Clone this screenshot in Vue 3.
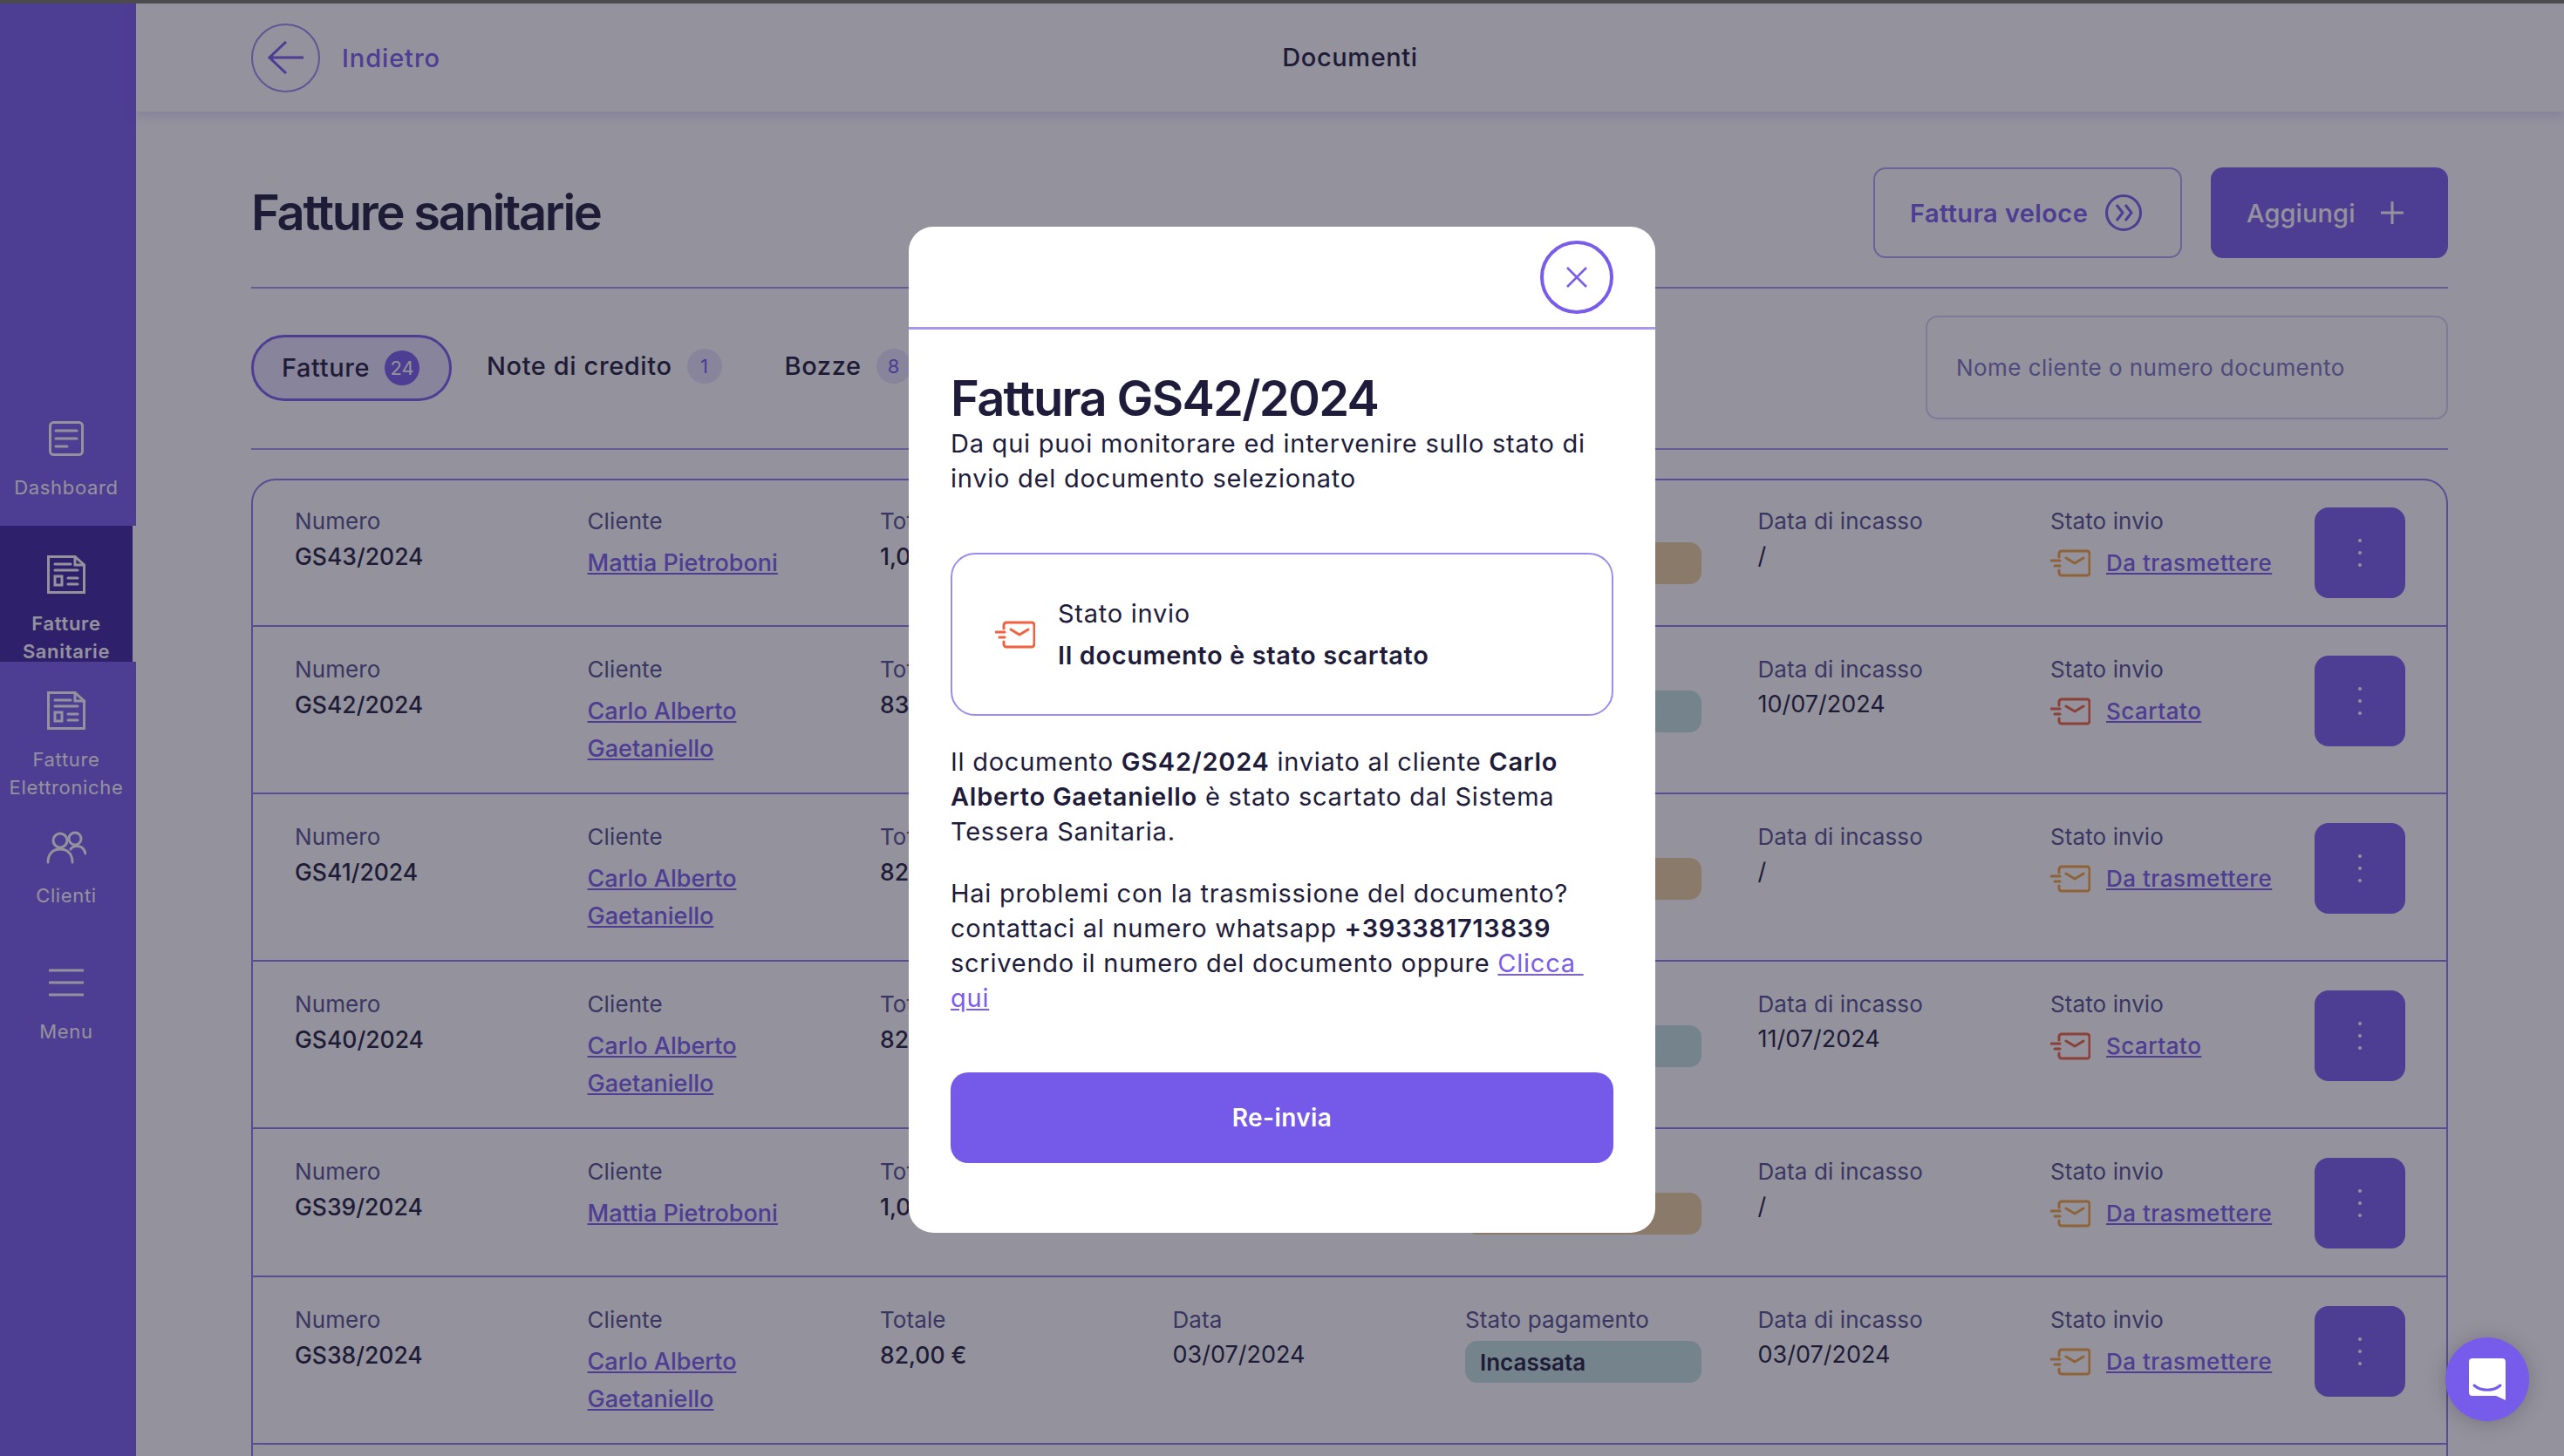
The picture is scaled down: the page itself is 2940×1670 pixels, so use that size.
<script setup>
const navItems = [
  { id: 'dashboard', label: ['Dashboard'], icon: 'dash' },
  { id: 'sanitarie', label: ['Fatture', 'Sanitarie'], icon: 'doc', active: true },
  { id: 'elettroniche', label: ['Fatture', 'Elettroniche'], icon: 'doc' },
  { id: 'clienti', label: ['Clienti'], icon: 'people' },
  { id: 'menu', label: ['Menu'], icon: 'menu' }
];

const carlo = 'Carlo Alberto Gaetaniello';
const mattia = 'Mattia Pietroboni';

// Fatture list, the part behind the modal is there too
const invoices = [
  { num: 'GS43/2024', client: mattia, total: '1,000,00 €', date: '03/07/2024', paid: false, cashed: '/', status: 'Da trasmettere' },
  { num: 'GS42/2024', client: carlo, total: '83,00 €', date: '10/07/2024', paid: true, cashed: '10/07/2024', status: 'Scartato' },
  { num: 'GS41/2024', client: carlo, total: '82,00 €', date: '09/07/2024', paid: false, cashed: '/', status: 'Da trasmettere' },
  { num: 'GS40/2024', client: carlo, total: '82,00 €', date: '11/07/2024', paid: true, cashed: '11/07/2024', status: 'Scartato' },
  { num: 'GS39/2024', client: mattia, total: '1,000,00 €', date: '03/07/2024', paid: false, cashed: '/', status: 'Da trasmettere' },
  { num: 'GS38/2024', client: carlo, total: '82,00 €', date: '03/07/2024', paid: true, cashed: '03/07/2024', status: 'Da trasmettere' }
];
</script>

<template>
  <div class="topline"></div>
  <div class="page">
    <aside class="sidebar">
      <div
        v-for="item in navItems"
        :key="item.id"
        class="nav-item"
        :class="{ active: item.active }"
      >
        <svg v-if="item.icon === 'dash'" class="nav-icon" width="40" height="44" viewBox="0 0 40 44" fill="none">
          <rect x="1.5" y="1.5" width="37" height="37" rx="4" />
          <path d="M8 11H32M8 20H32M8 29H21" />
        </svg>
        <svg v-else-if="item.icon === 'doc'" class="nav-icon doc" width="44" height="44" viewBox="0 0 44 44" fill="none">
          <path d="M1.5 1.5H32L42.5 11V42.5H1.5Z" />
          <path d="M32 1.5V11H42.5M9 10H27M9 17H35M9 34V24H17V34ZM24 26H35M24 33H35" />
        </svg>
        <svg v-else-if="item.icon === 'people'" class="nav-icon people" width="46" height="44" viewBox="0 0 46 44" fill="none">
          <circle cx="16" cy="11" r="8" />
          <circle cx="33" cy="9" r="7" />
          <path d="M2 36C2 26 8 21 16 21C24 21 30 26 30 36M28 21C30 17 42 14 45 26" />
        </svg>
        <svg v-else class="nav-icon" width="40" height="44" viewBox="0 0 40 44" fill="none">
          <path d="M1 6H39M1 20H39M1 34H39" />
        </svg>
        <span v-for="line in item.label" :key="line" class="nav-label">{{ line }}</span>
      </div>
    </aside>

    <main class="content">
      <header class="topbar">
        <div class="back">
          <span class="back-circle">
            <svg width="42" height="38" viewBox="0 0 42 38" fill="none">
              <path d="M41 19H2M21 1L2 19L21 37" />
            </svg>
          </span>
          <span class="back-text">Indietro</span>
        </div>
        <span class="topbar-title">Documenti</span>
      </header>

      <section class="body">
        <div class="title-row">
          <h1>Fatture sanitarie</h1>
          <div class="actions">
            <button class="btn-outline">
              Fattura veloce
              <svg width="42" height="42" viewBox="0 0 42 42" fill="none">
                <circle cx="21" cy="21" r="19.5" />
                <path d="M13 12L20 21L13 30M23 12L30 21L23 30" />
              </svg>
            </button>
            <button class="btn-fill">
              Aggiungi
              <svg width="28" height="28" viewBox="0 0 28 28" fill="none">
                <path d="M14 1V27M1 14H27" />
              </svg>
            </button>
          </div>
        </div>

        <div class="tabs-row">
          <div class="tabs">
            <div class="tab selected">Fatture <span class="count">24</span></div>
            <div class="tab">Note di credito <span class="count">1</span></div>
            <div class="tab drafts">Bozze <span class="count">8</span></div>
          </div>
          <div class="search">Nome cliente o numero documento</div>
        </div>

        <div class="list">
          <div v-for="inv in invoices" :key="inv.num" class="row">
            <div>
              <div class="label">Numero</div>
              <div class="value strong">{{ inv.num }}</div>
            </div>
            <div>
              <div class="label">Cliente</div>
              <div class="client"><a class="link">{{ inv.client }}</a></div>
            </div>
            <div>
              <div class="label">Totale</div>
              <div class="value strong">{{ inv.total }}</div>
            </div>
            <div>
              <div class="label">Data</div>
              <div class="value">{{ inv.date }}</div>
            </div>
            <div>
              <div class="label">Stato pagamento</div>
              <div class="pill" :class="inv.paid ? 'paid' : 'unpaid'">{{ inv.paid ? 'Incassata' : 'Da incassare' }}</div>
            </div>
            <div>
              <div class="label">Data di incasso</div>
              <div class="value">{{ inv.cashed }}</div>
            </div>
            <div>
              <div class="label">Stato invio</div>
              <div class="send">
                <svg class="send-icon" :class="inv.status === 'Scartato' ? 'red' : 'amber'" width="46" height="32" viewBox="0 0 46 32" fill="none">
                  <path d="M10 9V5A3 3 0 0 1 13 2H42A3 3 0 0 1 45 5V27A3 3 0 0 1 42 30H13A3 3 0 0 1 10 27V24" />
                  <path d="M1 13H11M5 19H11M18 10L28 16L38 10" />
                </svg>
                <a class="link">{{ inv.status }}</a>
              </div>
            </div>
            <button class="kebab"><i></i><i></i><i></i></button>
          </div>
        </div>
      </section>
    </main>
  </div>

  <div class="overlay">
    <div class="modal">
      <div class="modal-head">
        <span class="close">
          <svg width="26" height="26" viewBox="0 0 26 26" fill="none">
            <path d="M2 2L24 24M24 2L2 24" />
          </svg>
        </span>
      </div>
      <div class="modal-body">
        <h2>Fattura GS42/2024</h2>
        <p class="intro">Da qui puoi monitorare ed intervenire sullo stato di invio del documento selezionato</p>

        <div class="status-box">
          <svg class="send-icon scarto" width="46" height="32" viewBox="0 0 46 32" fill="none">
            <path d="M10 9V5A3 3 0 0 1 13 2H42A3 3 0 0 1 45 5V27A3 3 0 0 1 42 30H13A3 3 0 0 1 10 27V24" />
            <path d="M1 13H11M5 19H11M18 10L28 16L38 10" />
          </svg>
          <div>
            <div class="status-label">Stato invio</div>
            <div class="status-text">Il documento è stato scartato</div>
          </div>
        </div>

        <p class="copy">Il documento <b>GS42/2024</b> inviato al cliente <b>Carlo Alberto Gaetaniello</b> è stato scartato dal Sistema Tessera Sanitaria.</p>
        <p class="copy second">Hai problemi con la trasmissione del documento? contattaci al numero whatsapp <b>+393381713839</b> scrivendo il numero del documento oppure <a class="modal-link">Clicca&nbsp;<wbr>qui</a></p>

        <button class="resend">Re-invia</button>
      </div>
    </div>
  </div>

  <div class="chat">
    <svg width="42" height="48" viewBox="0 0 42 48" fill="none">
      <path class="bubble" d="M4 0H38A4 4 0 0 1 42 4V48L31 43H4A4 4 0 0 1 0 39V4A4 4 0 0 1 4 0Z" />
      <path class="smile" d="M6 31C14 38 28 38 36 31" />
    </svg>
  </div>
</template>

<style>
html,
body {
  margin: 0;
  height: 1670px;
  overflow: hidden;
  background: #fff;
}
</style>

<style scoped>
* {
  box-sizing: border-box;
}

.topline {
  height: 4px;
  background: #4b4b4e;
}

.page {
  display: flex;
  height: 1666px;
  overflow: hidden;
  font-family: Inter, "Liberation Sans", sans-serif;
  color: #1e1c3a;
}

/* Sidebar */
.sidebar {
  width: 156px;
  flex-shrink: 0;
  display: flex;
  flex-direction: column;
  justify-content: center;
  background: #7a5ceb;
}

.nav-item {
  height: 156px;
  overflow: hidden;
  display: flex;
  flex-direction: column;
  align-items: center;
  padding: 36px 4px 0 0;
  color: #fff;
}

.nav-item.active {
  background: #3e25a0;
  border-right: 4px solid #fff;
  padding-right: 0;
  font-weight: 600;
}

.nav-icon {
  flex-shrink: 0;
  stroke: #fff;
  stroke-width: 3;
  stroke-linecap: round;
  margin-bottom: 16px;
}

.nav-icon.doc {
  margin-top: -2px;
  margin-bottom: 18px;
}

.nav-icon.people {
  margin-top: 2px;
  margin-bottom: 14px;
}

.nav-label {
  font-size: 22px;
  line-height: 32px;
  letter-spacing: 0.65px;
  white-space: nowrap;
}

/* Main area */
.content {
  flex: 1;
  min-width: 0;
}

.topbar {
  position: relative;
  height: 124px;
  display: flex;
  align-items: center;
  justify-content: center;
  background: #fff;
  box-shadow: 0 4px 12px rgba(122, 92, 235, 0.25);
}

.back {
  position: absolute;
  left: 132px;
  display: flex;
  align-items: center;
  gap: 25px;
}

.back-circle {
  width: 79px;
  height: 79px;
  border-radius: 50%;
  border: 2px solid #9d8cf0;
  display: flex;
  align-items: center;
  justify-content: center;
}

.back-circle path {
  stroke: #7a5ceb;
  stroke-width: 3;
}

.back-text {
  font-size: 29px;
  font-weight: 500;
  letter-spacing: 0.9px;
  color: #7a5ceb;
}

.topbar-title {
  font-size: 29px;
  font-weight: 500;
  letter-spacing: 0.6px;
  margin-top: -2px;
}

.body {
  padding: 0 133px 0 132px;
}

.title-row {
  display: flex;
  align-items: center;
  justify-content: space-between;
  padding: 64px 0 33px;
  border-bottom: 2px solid #a797f2;
}

h1 {
  margin: 0;
  font-size: 56px;
  font-weight: 600;
  letter-spacing: -2.25px;
}

.actions {
  display: flex;
  gap: 33px;
}

button {
  font-family: inherit;
  border: 0;
}

.btn-outline,
.btn-fill {
  height: 104px;
  border-radius: 14px;
  display: flex;
  align-items: center;
  font-size: 29px;
  font-weight: 600;
}

.btn-outline {
  width: 354px;
  padding: 0 0 0 40px;
  gap: 20px;
  letter-spacing: 0.4px;
  background: #fff;
  border: 2px solid #b2a5f4;
  color: #7a5ceb;
}

.btn-outline circle,
.btn-outline path {
  stroke: #7a5ceb;
  stroke-width: 3;
}

.btn-fill {
  width: 272px;
  padding: 0 0 0 41px;
  gap: 28px;
  letter-spacing: 0.1px;
  background: #7a5ceb;
  color: #fff;
  font-weight: 500;
}

.btn-fill path {
  stroke: #fff;
  stroke-width: 3;
}

.tabs-row {
  display: flex;
  align-items: center;
  justify-content: space-between;
  padding: 31px 0 33px;
  border-bottom: 2px solid #a797f2;
}

.tabs {
  display: flex;
  align-items: center;
  gap: 40px;
}

.tab {
  display: flex;
  align-items: center;
  gap: 17px;
  font-size: 29px;
  font-weight: 500;
  letter-spacing: 0.6px;
  margin-top: -4px;
}

.tab.drafts {
  margin-left: 32px;
}

.tab.selected {
  width: 230px;
  height: 76px;
  margin-top: 0;
  padding-left: 32px;
  gap: 17px;
  border: 3px solid #7a5ceb;
  border-radius: 38px;
  background: #e9e5fc;
}

.count {
  width: 40px;
  height: 40px;
  border-radius: 50%;
  display: flex;
  align-items: center;
  justify-content: center;
  font-size: 22px;
  font-weight: 400;
  letter-spacing: 0;
  color: #7a5ceb;
  background: #e9e5fc;
}

.selected .count {
  background: #7a5ceb;
  color: #fff;
}

.search {
  width: 599px;
  height: 119px;
  padding-left: 33px;
  display: flex;
  align-items: center;
  border: 2px solid #d7d2f5;
  border-radius: 14px;
  font-size: 26px;
  letter-spacing: 0.45px;
  color: #7e75c0;
}

.list {
  margin-top: 33px;
  padding-bottom: 120px;
  border: 2px solid #8f7bee;
  border-radius: 28px 28px 0 0;
}

.row {
  display: grid;
  grid-template-columns: repeat(6, 335.5px) 303px 104px;
  align-items: start;
  padding: 29px 0 29px 48px;
  border-bottom: 2px solid #8f7bee;
}

.row:first-child {
  padding-top: 27px;
}

.label {
  font-size: 26px;
  line-height: 40px;
  letter-spacing: 0.1px;
  color: #55508e;
}

.value {
  font-size: 27px;
  line-height: 40px;
}

.value.strong {
  font-size: 26.5px;
  font-weight: 500;
}

.client {
  max-width: 270px;
  margin-top: 6px;
  font-size: 27px;
  line-height: 43px;
}

.link {
  color: #7a5ceb;
  font-weight: 500;
  text-decoration: underline;
}

.pill {
  width: 271px;
  height: 48px;
  margin-top: 4px;
  padding-left: 17px;
  display: flex;
  align-items: center;
  border-radius: 14px;
  font-size: 26px;
  font-weight: 600;
}

.pill.paid {
  background: #c4e2df;
}

.pill.unpaid {
  background: #ecd29e;
}

.send {
  display: flex;
  align-items: center;
  gap: 18px;
  margin-top: 6px;
  font-size: 26px;
  line-height: 43px;
  letter-spacing: 0.5px;
}

.send-icon {
  flex-shrink: 0;
  stroke-width: 3;
  stroke-linecap: round;
  stroke-linejoin: round;
}

.send-icon.amber {
  stroke: #f6a53e;
}

.send-icon.red {
  stroke: #f0623f;
}

.send-icon.scarto {
  stroke: #f0623f;
}

.kebab {
  width: 104px;
  height: 104px;
  margin: 4px 0 2px;
  border-radius: 16px;
  background: #7a5ceb;
  display: flex;
  flex-direction: column;
  align-items: center;
  justify-content: center;
  gap: 10px;
}

.kebab i {
  width: 4px;
  height: 4px;
  border-radius: 50%;
  background: #fff;
}

/* Modal */
.overlay {
  position: fixed;
  top: 4px;
  left: 0;
  width: 2940px;
  height: 1666px;
  display: flex;
  align-items: center;
  justify-content: center;
  background: rgba(29, 27, 50, 0.48);
  font-family: Inter, "Liberation Sans", sans-serif;
  color: #1e1c3a;
}

.modal {
  width: 856px;
  height: 1154px;
  background: #fff;
  border-radius: 28px;
  overflow: hidden;
}

.modal-head {
  height: 118px;
  padding: 16px 48px 0 0;
  display: flex;
  justify-content: flex-end;
  border-bottom: 3px solid #a797f2;
}

.close {
  width: 84px;
  height: 84px;
  border-radius: 50%;
  border: 4px solid #7a5ceb;
  display: flex;
  align-items: center;
  justify-content: center;
}

.close path {
  stroke: #7a5ceb;
  stroke-width: 2.5;
}

.modal-body {
  padding: 47px 48px 0 48px;
}

h2 {
  margin: 0;
  font-size: 56px;
  line-height: 64px;
  font-weight: 600;
  letter-spacing: -1.7px;
}

.intro,
.copy {
  margin: 0;
  font-size: 29px;
  line-height: 40px;
  letter-spacing: 0.75px;
}

.status-box {
  height: 187px;
  margin-top: 65px;
  padding-left: 49px;
  display: flex;
  align-items: center;
  gap: 26px;
  border: 2px solid #9d8cf0;
  border-radius: 28px;
}

.status-label {
  font-size: 29px;
  line-height: 48px;
  letter-spacing: 0.75px;
}

.status-text {
  font-size: 29px;
  line-height: 48px;
  font-weight: 600;
  letter-spacing: 0.6px;
}

.copy {
  margin-top: 33px;
}

.copy b {
  font-weight: 600;
}

.copy.second {
  margin-top: 31px;
}

.modal-link {
  color: #7a5ceb;
  text-decoration: underline;
}

.resend {
  display: block;
  width: 760px;
  height: 104px;
  margin-top: 65px;
  border-radius: 20px;
  background: #755aea;
  color: #fff;
  font-size: 28px;
  font-weight: 600;
  letter-spacing: 0.4px;
}

.chat {
  position: fixed;
  left: 2804px;
  top: 1534px;
  width: 96px;
  height: 96px;
  border-radius: 50%;
  background: #775beb;
  box-shadow: 0 2px 24px rgba(0, 0, 0, 0.2);
  display: flex;
  align-items: center;
  justify-content: center;
}

.bubble {
  fill: #fff;
}

.smile {
  stroke: #775beb;
  stroke-width: 3;
  stroke-linecap: round;
}
</style>
